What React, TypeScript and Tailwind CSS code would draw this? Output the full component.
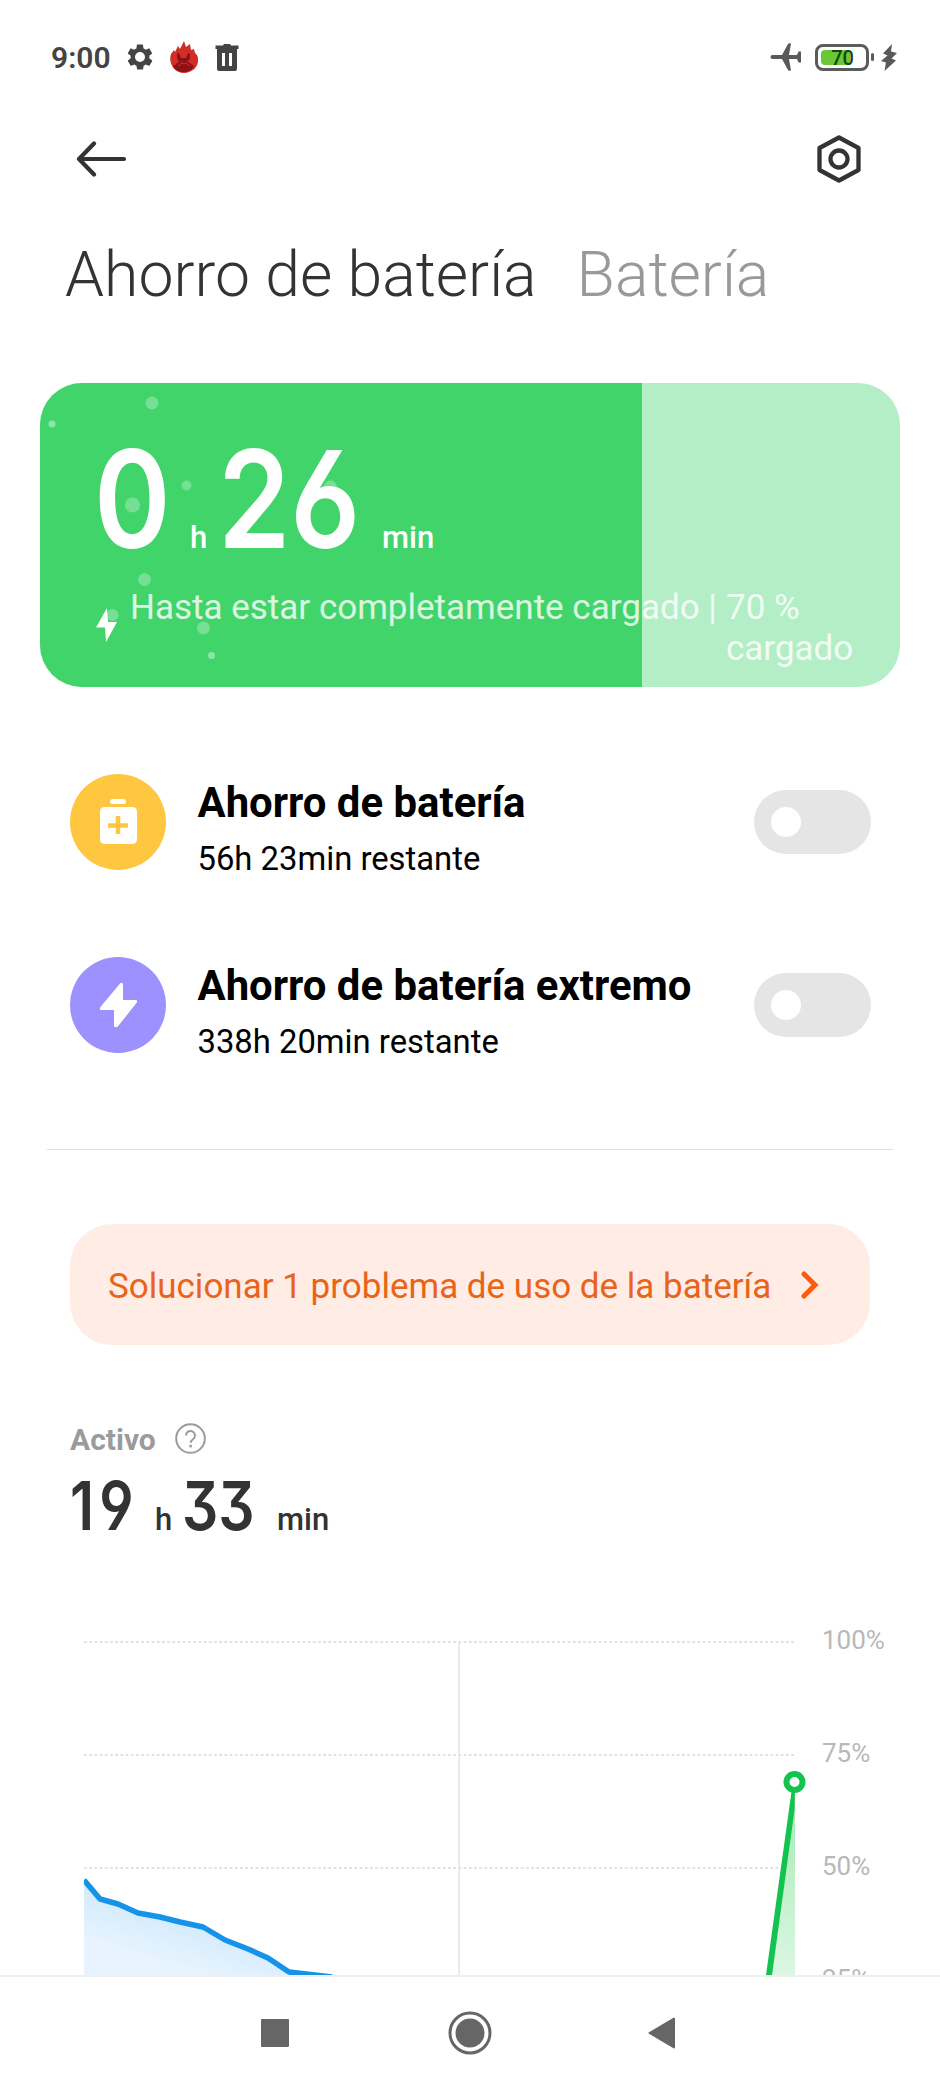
import React, { useState } from "react";
import clsx from "clsx";

const bubbles = [
    { x: 112, y: 20, r: 6.5 },
    { x: 12, y: 41, r: 3.5 },
    { x: 146.5, y: 102.5, r: 5 },
    { x: 92.5, y: 122, r: 7.5 },
    { x: 290.5, y: 104, r: 6.5 },
    { x: 104.5, y: 196.5, r: 6.5 },
    { x: 72.5, y: 232, r: 6 },
    { x: 163.5, y: 245, r: 6.5 },
    { x: 171.5, y: 272.5, r: 3.5 },
];

const levels = ["100%", "75%", "50%", "25%"];

function StatusBar() {
    return (
        <header className="flex h-[78px] shrink-0 items-end pl-[51px] pr-[43px] text-[#444]">
            <div className="flex h-10 w-full items-center">
                <span className="w-[74px] text-[30px] leading-[38px] font-semibold">9:00</span>
                <svg className="-mt-0.5" width="30" height="30" viewBox="0 0 24 24" fill="currentColor">
                    <path d="M19.4 13c0-.3.1-.6.1-1s0-.7-.1-1l2.1-1.6c.2-.2.3-.4.1-.7l-2-3.4c-.1-.2-.4-.3-.6-.2l-2.5 1c-.5-.4-1.1-.7-1.7-1l-.4-2.6c0-.3-.2-.5-.5-.5h-3.9c-.3 0-.5.2-.5.5l-.4 2.6c-.6.3-1.2.6-1.7 1l-2.5-1c-.2-.1-.5 0-.6.2l-2 3.4c-.1.3-.1.5.1.7l2.2 1.6c0 .3-.1.6-.1 1s0 .7.1 1l-2.1 1.6c-.2.2-.3.4-.1.7l2 3.4c.1.2.4.3.6.2l2.5-1c.5.4 1.1.7 1.7 1l.4 2.6c0 .3.2.5.5.5h3.9c.3 0 .5-.2.5-.5l.4-2.6c.6-.3 1.2-.6 1.7-1l2.5 1c.2.1.5 0 .6-.2l2-3.4c.1-.3.1-.5-.1-.7zM12 16a4 4 0 1 1 0-8 4 4 0 0 1 0 8z" />
                </svg>
                <svg className="-mt-0.5 ml-[15px]" width="28" height="32" viewBox="0 0 28 32">
                    <path d="M1 13l3-4 1 2 3-6 2 3 4-8 2 6 4-3 1 6 3-1 1 4 2 2c4 9-3 18-13 18S-2 22 1 13z" fill="#cf2f27" />
                    <path d="M3 25c3-2 5-3 6-5-3-2-2-8-1-8 2 0 2 3 3 5h5c1-2 1-5 3-5 1 0 2 6-1 8 1 2 3 3 6 5-4 8-17 8-21 0z" fill="#8c1217" />
                    <path d="M8 25l4-3 2 1 2-1 4 3M11 20v1M17 20v1" stroke="#cf2f27" strokeWidth="1" fill="none" />
                </svg>
                <svg className="-mt-0.5 ml-[17px]" width="24" height="27" viewBox="0 0 24 27" fill="currentColor">
                    <path d="M8 1.5 9 0h6l1 1.5h7.5V5H22v20q0 2-2 2H4q-2 0-2-2V5H.5V1.5zM7 9v13h3V9zm7 0v13h3V9z" fillRule="evenodd" />
                </svg>
                <svg className="-mt-0.5 ml-auto" width="32" height="28" viewBox="0 0 32 28" fill="#595959">
                    <path d="M2 12h10L18 1q.5-1 3-.5L19 12h8l1.5-3.5H31v11h-2.5L27 16h-8l2 11.500q-2.500.5-3-.5L12 16H2q-1.500-.5-1.500-2T2 12z" />
                </svg>
                <div className="relative -mt-0.5 ml-[13px] flex h-[27px] w-[54px] items-center rounded-lg border-[3px] border-[#5b5b5b] pl-[3px]">
                    <div className="h-[15px] w-[29px] rounded-sm bg-[#6ac832]" />
                    <span className="absolute inset-0 pl-px text-center text-[20px] leading-[22px] font-medium text-[#174516]">70</span>
                </div>
                <div className="-mt-0.5 ml-[2px] h-2 w-[3px] rounded-sm bg-[#5b5b5b]" />
                <svg className="-mt-0.5 ml-[7px]" width="16" height="27" viewBox="0 0 16 27" fill="#595959">
                    <path d="M11 0 2 9.500l4.500 2L0 17l5 1.500L3.500 27 15 16.500l-4.500-2L16 9l-6-1.500z" />
                </svg>
            </div>
        </header>
    );
}

function TopBar() {
    return (
        <div className="mb-0.5 flex h-[162px] shrink-0 items-center justify-between pl-[76px] pr-[78px]">
            <svg width="51" height="36" viewBox="0 0 51 36" fill="none" stroke="#333" strokeWidth="4.200" strokeLinecap="round" strokeLinejoin="round">
                <path d="M18 2.500 3 18l15 15.500M3 18h45" />
            </svg>
            <svg width="46" height="48" viewBox="0 0 46 48" fill="none" stroke="#333" strokeWidth="4.300" strokeLinejoin="round">
                <path d="M23 2.500 42.500 13v22L23 45.500 3.500 35V13z" />
                <circle cx="23" cy="24" r="8.500" />
            </svg>
        </div>
    );
}

interface DurationProps {
    hours: string;
    minutes: string;
    large?: boolean;
}

function Digits({ value, large }: { value: string; large?: boolean }) {
    return (
        <span
            className={clsx(
                "inline-block origin-left whitespace-nowrap font-['Inter',sans-serif] font-semibold [font-feature-settings:'cv03','cv04','cv09']",
                large ? "text-[135px] leading-[140px] scale-x-[0.86]" : "text-[67px] leading-[70px] scale-x-[0.85]",
                // the narrow "1" needs some air before the next digit
                value.startsWith("1") && "tracking-[6px]"
            )}
        >
            {value}
        </span>
    );
}

function Duration({ hours, minutes, large }: DurationProps) {
    return (
        <div className={clsx("flex items-baseline font-medium", large ? "-ml-[2px] h-[140px] text-white" : "h-[70px] text-[#333]")}>
            <div className={large ? "w-[96px]" : "w-[85px]"}><Digits value={hours} large={large} /></div>
            <span className={clsx("text-[31px]", large ? "w-[28px]" : "w-[27px]")}>h</span>
            <div className={large ? "w-[164px]" : "w-[95px]"}><Digits value={minutes} large={large} /></div>
            <span className="text-[31px]">min</span>
        </div>
    );
}

function ChargeCard() {
    return (
        <section className="relative mx-10 h-[304px] shrink-0 overflow-hidden rounded-[42px] bg-[#b3eec6]">
            <svg className="absolute inset-0" width="602" height="304">
                <rect width="602" height="304" fill="#41d46a" />
                {bubbles.map((b) => (
                    <circle key={b.x} cx={b.x} cy={b.y} r={b.r} fill="#fff" opacity={b.r < 4 ? 0.4 : 0.28} />
                ))}
            </svg>
            <div className="relative pl-[56px] pt-[46px]">
                <Duration hours="0" minutes="26" large />
                <div className="mt-[18px] flex text-[35px] leading-[41px] text-white/80">
                    <svg className="mt-[21px]" width="21" height="34" viewBox="0 0 21 34" fill="#fff">
                        <path d="M11 0 0 19.500h9L10 34l11-20h-9z" />
                    </svg>
                    <p className="ml-[13px] w-[596px] whitespace-nowrap">Hasta estar completamente cargado |</p>
                    <p className="w-[132px]">70 % cargado</p>
                </div>
            </div>
        </section>
    );
}

function Toggle() {
    const [on, setOn] = useState(false);

    return (
        <button
            onClick={() => setOn(!on)}
            className={clsx("flex h-16 w-[117px] items-center rounded-full px-[17px]", on ? "justify-end bg-[#42d46a]" : "bg-[#e5e5e5]")}
        >
            <span className="size-[30px] rounded-full bg-white" />
        </button>
    );
}

interface ModeRowProps {
    title: string;
    subtitle: string;
    color: string;
    icon: React.ReactNode;
}

function ModeRow({ title, subtitle, color, icon }: ModeRowProps) {
    return (
        <div className="flex h-[183px] items-center pl-[69.5px] pr-[69px]">
            <div className={clsx("flex size-24 items-center justify-center rounded-full", color)}>{icon}</div>
            <div className="ml-[32px] flex-1 pt-[18px] whitespace-nowrap text-black">
                <h2 className="text-[41.9px] leading-[56px] font-bold">{title}</h2>
                <p className="text-[32.8px] leading-[56px]">{subtitle}</p>
            </div>
            <Toggle />
        </div>
    );
}

function Chart() {
    const line = "M14 258 30 277 48 282 68 291 90 295 110 300 133 305 155 318 178 327 198 336 219 350 262 355";

    return (
        <section className="flex h-[365px] shrink-0 overflow-hidden pl-[70px]">
            <svg className="mt-3 shrink-0" width="753" height="353" viewBox="0 0 753 353" fill="none">
                <defs>
                    <linearGradient id="used" x1="60" y1="275" x2="45" y2="325" gradientUnits="userSpaceOnUse">
                        <stop offset="0" stopColor="#d0eafc" />
                        <stop offset="1" stopColor="#e7f3fe" />
                    </linearGradient>
                    <linearGradient id="charged" x1="0" y1="168" x2="0" y2="353" gradientUnits="userSpaceOnUse">
                        <stop offset="0" stopColor="#a4e9b4" />
                        <stop offset="1" stopColor="#dcf7e2" />
                    </linearGradient>
                    <clipPath id="plot">
                        <path d="M14 0H753V353H14z" />
                    </clipPath>
                </defs>
                {[20, 133, 246].map((y) => (
                    <path key={y} d={`M14 ${y}H725`} stroke="#d9d9d9" strokeWidth="1.500" strokeDasharray="2.800 2.400" />
                ))}
                <path d="M389 20V353" stroke="#e6e6e6" strokeWidth="1.600" />
                <g clipPath="url(#plot)">
                    <path d={`${line}H14z`} fill="url(#used)" />
                    <path d={line} stroke="#1593e8" strokeWidth="5.500" strokeLinejoin="round" />
                    <path d="M725 168V353H700z" fill="url(#charged)" />
                    <path d="M725 166 722 166 696 353H702L724.500 188z" fill="#14c24f" />
                    <circle cx="724.500" cy="160" r="8" fill="#fff" stroke="#14c24f" strokeWidth="6" />
                </g>
            </svg>
            <div className="-ml-px pt-3 text-[26px] text-[#b8b8b8]">
                {levels.map((level) => (
                    <div key={level} className="h-[113px] leading-9">{level}</div>
                ))}
            </div>
        </section>
    );
}

export default function App() {
    return (
        <main className="flex h-[2089px] w-[940px] flex-col overflow-hidden bg-white font-['Roboto',sans-serif]">
            <StatusBar />
            <TopBar />
            <nav className="flex h-[141px] shrink-0 gap-10 whitespace-nowrap pl-[65px] text-[62.5px] leading-[66px] font-light">
                <span className="text-[#333]">Ahorro de batería</span>
                <span className="text-[#999]">Batería</span>
            </nav>
            <ChargeCard />

            <section className="mt-[43px] shrink-0">
                <ModeRow
                    title="Ahorro de batería"
                    subtitle="56h 23min restante"
                    color="bg-[#ffc63f]"
                    icon={
                        <svg width="38" height="46" viewBox="0 0 38 46">
                            <rect x="11" y="0" width="16" height="5" rx="2.500" fill="#fff" />
                            <rect x="1" y="8" width="37" height="37" rx="4.500" fill="#fff" />
                            <path d="M19 17v18M9 26.500h20" stroke="#ffc63f" strokeWidth="4.500" />
                        </svg>
                    }
                />
                <ModeRow
                    title="Ahorro de batería extremo"
                    subtitle="338h 20min restante"
                    color="bg-[#9d90ff]"
                    icon={
                        <svg width="38" height="46" viewBox="0 0 38 46" fill="#fff" stroke="#fff" strokeWidth="2" strokeLinejoin="round">
                            <path d="M22 2 2 26v1h14v17h2L37 20v-1H23V2z" />
                        </svg>
                    }
                />
            </section>

            <hr className="mx-[47px] mt-[53px] shrink-0 border-[#dedede]" />

            <button className="mx-[70px] mt-[74px] flex h-[121px] shrink-0 items-center rounded-[42px] bg-[#ffede5] pl-[38px] text-[35px] text-[#e9641b]">
                <span className="w-[693px] pt-1.5 text-left whitespace-nowrap">Solucionar 1 problema de uso de la batería</span>
                <svg width="18" height="28" viewBox="0 0 18 28" fill="none" stroke="#ff5a0e" strokeWidth="5" strokeLinecap="round">
                    <path d="M3 3 14 14 3 25" />
                </svg>
            </button>

            <section className="mt-[73px] h-[192px] shrink-0 pl-[70px]">
                <div className="flex h-10 items-center text-[30px] font-bold text-[#9b9b9b]">
                    <span className="w-[105px] pt-0.5">Activo</span>
                    <svg width="31" height="31" viewBox="0 0 31 31" fill="none" stroke="#9b9b9b" strokeWidth="2">
                        <circle cx="15.500" cy="15.500" r="14.300" />
                        <path d="M11 12.500a4.500 4.500 0 1 1 7.500 3.300c-2 1.600-2.800 2-2.800 4" />
                        <path d="M15.600 21.800v2.600" strokeWidth="2.600" />
                    </svg>
                </div>
                <div className="mt-[13px]">
                    <Duration hours="19" minutes="33" />
                </div>
            </section>

            <Chart />

            <footer className="flex flex-1 items-center border-t-2 border-[#f0f0f0] pl-[261px] text-[#666]">
                <div className="size-7 rounded-[1px] bg-current" />
                <svg className="ml-[159px]" width="44" height="44" viewBox="0 0 44 44">
                    <circle cx="22" cy="22" r="20" fill="none" stroke="currentColor" strokeWidth="3" />
                    <circle cx="22" cy="22" r="14.500" fill="currentColor" />
                </svg>
                <svg className="ml-[156px]" width="28" height="32" viewBox="0 0 28 32" fill="currentColor" stroke="currentColor" strokeWidth="2" strokeLinejoin="round">
                    <path d="M26 1.500v29L1.500 16z" />
                </svg>
            </footer>
        </main>
    );
}
